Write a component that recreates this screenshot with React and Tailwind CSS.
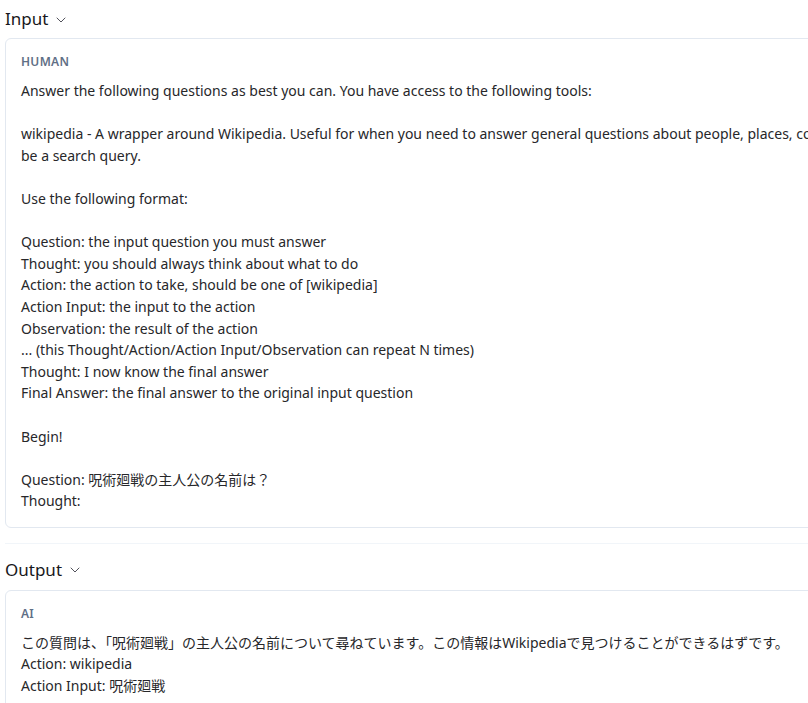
import { ChevronDown } from 'lucide-react';

const inputLines = [
  'Answer the following questions as best you can. You have access to the following tools:',
  '',
  'wikipedia - A wrapper around Wikipedia. Useful for when you need to answer general questions about people, places, companies, facts, historical events, or other subjects. Input should',
  'be a search query.',
  '',
  'Use the following format:',
  '',
  'Question: the input question you must answer',
  'Thought: you should always think about what to do',
  'Action: the action to take, should be one of [wikipedia]',
  'Action Input: the input to the action',
  'Observation: the result of the action',
  '... (this Thought/Action/Action Input/Observation can repeat N times)',
  'Thought: I now know the final answer',
  'Final Answer: the final answer to the original input question',
  '',
  'Begin!',
  '',
  'Question: 呪術廻戦の主人公の名前は？',
  'Thought:',
];

const outputLines = [
  'この質問は、「呪術廻戦」の主人公の名前について尋ねています。この情報はWikipediaで見つけることができるはずです。',
  'Action: wikipedia',
  'Action Input: 呪術廻戦',
];

function Message({ role, lines }) {
  return (
    <div className="w-[1300px] border border-[#e2e8f0] rounded-md px-[15px] pt-[15px] pb-[15px]">
      <div className="text-[12px] leading-4 font-semibold tracking-wide text-[#5f6f86]">{role}</div>
      <div className="mt-[10px] text-[14px] leading-[21.6px] text-[#27272a]">
        {lines.map((l, i) => (
          <div key={i} className="whitespace-pre h-[21.6px]">{l}</div>
        ))}
      </div>
    </div>
  );
}

function Section({ title, children, divider, cardGap }) {
  return (
    <div className={divider ? 'pb-[15px] border-b border-[#f1f5f9]' : ''}>
      <div className="h-[37px] flex items-center gap-[5px] text-[17px] text-[#18181b]">
        <span>{title}</span>
        <ChevronDown size={16} strokeWidth={1.5} className="text-[#52525b] mt-[2px]" />
      </div>
      <div className={cardGap}>{children}</div>
    </div>
  );
}

export default function App() {
  return (
    <div
      className="w-[808px] h-[703px] overflow-hidden bg-white pl-[5px]"
      style={{ fontFamily: '"Noto Sans", "Noto Sans CJK JP", sans-serif' }}
    >
      <Section title="Input" divider cardGap="mt-[1px]">
        <Message role="HUMAN" lines={inputLines} />
      </Section>
      <div className="pt-[7px]">
        <Section title="Output" cardGap="mt-[2px]">
          <Message role="AI" lines={outputLines} />
        </Section>
      </div>
    </div>
  );
}
